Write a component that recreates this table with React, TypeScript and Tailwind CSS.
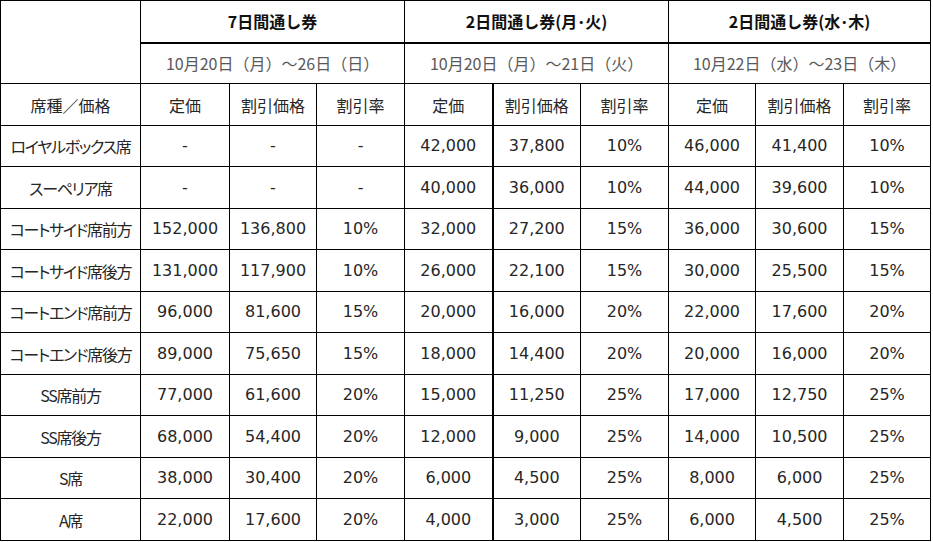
import React from "react";

const jp = "[font-family:Noto_Sans_CJK_JP,sans-serif]";
const num = "[font-family:DejaVu_Sans,Verdana,Noto_Sans_CJK_JP,sans-serif]";

const rows: [string, string[]][] = [
  ["ロイヤルボックス席", ["-", "-", "-", "42,000", "37,800", "10%", "46,000", "41,400", "10%"]],
  ["スーペリア席", ["-", "-", "-", "40,000", "36,000", "10%", "44,000", "39,600", "10%"]],
  ["コートサイド席前方", ["152,000", "136,800", "10%", "32,000", "27,200", "15%", "36,000", "30,600", "15%"]],
  ["コートサイド席後方", ["131,000", "117,900", "10%", "26,000", "22,100", "15%", "30,000", "25,500", "15%"]],
  ["コートエンド席前方", ["96,000", "81,600", "15%", "20,000", "16,000", "20%", "22,000", "17,600", "20%"]],
  ["コートエンド席後方", ["89,000", "75,650", "15%", "18,000", "14,400", "20%", "20,000", "16,000", "20%"]],
  ["SS席前方", ["77,000", "61,600", "20%", "15,000", "11,250", "25%", "17,000", "12,750", "25%"]],
  ["SS席後方", ["68,000", "54,400", "20%", "12,000", "9,000", "25%", "14,000", "10,500", "25%"]],
  ["S席", ["38,000", "30,400", "20%", "6,000", "4,500", "25%", "8,000", "6,000", "25%"]],
  ["A席", ["22,000", "17,600", "20%", "4,000", "3,000", "25%", "6,000", "4,500", "25%"]],
];

const colW = [140, 89, 87, 88, 88, 88, 88, 87, 88, 87];
const bodyH = [41, 42, 41, 42, 41, 42, 41, 42, 41, 42];

export default function App() {
  const cell = "border border-black text-center align-middle p-0 whitespace-nowrap";
  return (
    <div className="bg-white w-[933px] h-[542px]">
      <table className="border-collapse table-fixed w-[931px] text-[16px]">
        <colgroup>
          {colW.map((w, i) => (
            <col key={i} style={{ width: w }} />
          ))}
        </colgroup>
        <tbody>
          <tr className="h-[42px]">
            <td rowSpan={2} className={cell}></td>
            {["7日間通し券", "2日間通し券(月･火)", "2日間通し券(水･木)"].map((t) => (
              <td key={t} colSpan={3} className={`${cell} border-b-2 font-bold text-[#111] ${jp}`}>
                {t}
              </td>
            ))}
          </tr>
          <tr className="h-[41px]">
            {["10月20日（月）～26日（日）", "10月20日（月）～21日（火）", "10月22日（水）～23日（木）"].map((t) => (
              <td key={t} colSpan={3} className={`${cell} text-[#595959] ${jp}`}>
                {t}
              </td>
            ))}
          </tr>
          <tr className="h-[42px]">
            <td className={`${cell} text-[#262626] ${jp}`}>席種／価格</td>
            {[0, 1, 2].map((g) =>
              ["定価", "割引価格", "割引率"].map((t, i) => (
                <td
                  key={`${g}-${i}`}
                  className={`${cell} text-[#262626] ${jp} ${g === 1 && i === 1 ? "border-l-2" : ""}`}
                >
                  {t}
                </td>
              ))
            )}
          </tr>
          {rows.map(([name, vals], r) => (
            <tr key={name} style={{ height: bodyH[r] }}>
              <td className={`${cell} text-[#262626] ${jp} [font-feature-settings:'palt'] tracking-[-1.3px]`}>{name}</td>
              {vals.map((v, i) => (
                <td
                  key={i}
                  className={`${cell} text-[#262626] ${num} ${i === 4 ? "border-l-2" : ""}`}
                >
                  {v}
                </td>
              ))}
            </tr>
          ))}
        </tbody>
      </table>
    </div>
  );
}
